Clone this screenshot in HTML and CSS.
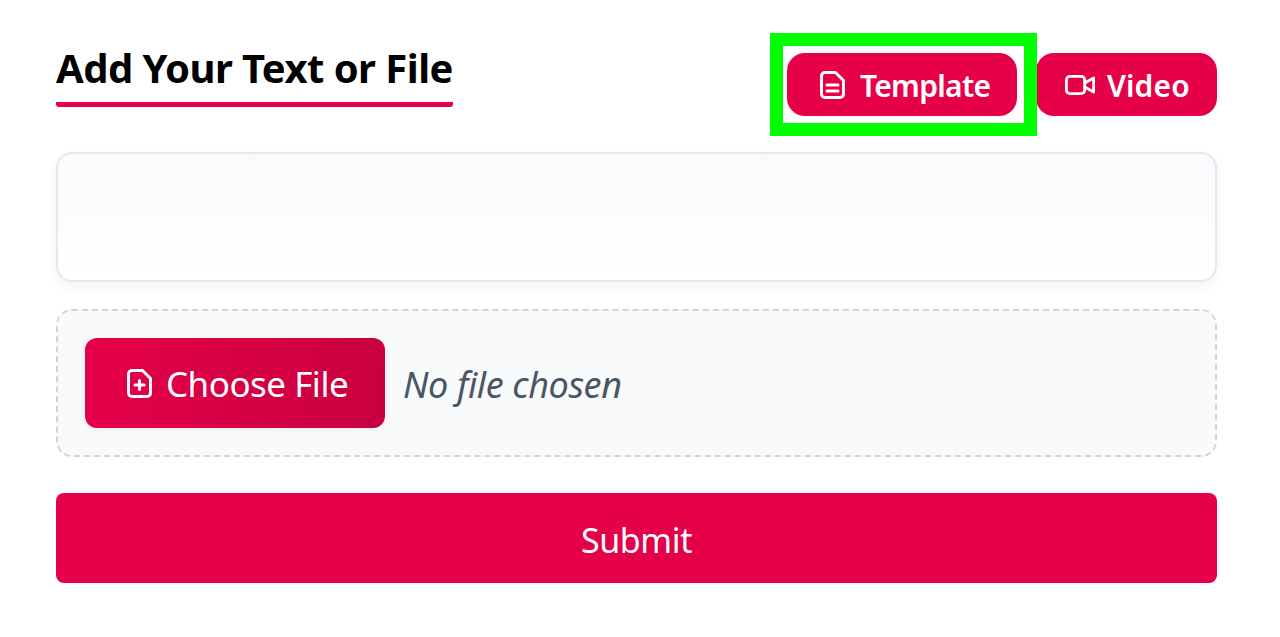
FILE: index.html
```html
<!DOCTYPE html>
<html lang="en">
<head>
<meta charset="utf-8">
<title>Add Your Text or File</title>
<link rel="stylesheet" href="styles.css">
</head>
<body>
<main class="panel">
  <header class="head">
    <h1 class="title">Add Your Text or File</h1>
    <div class="actions">
      <div class="highlighted">
        <button class="pill" type="button">
          <svg class="icon-file" viewBox="0 0 25 28" fill="none" stroke="currentColor" stroke-width="3" stroke-linecap="round" stroke-linejoin="round"><path d="M5 1.5h10.5l8 8V23a3.5 3.5 0 0 1-3.5 3.5H5A3.5 3.5 0 0 1 1.5 23V5A3.5 3.5 0 0 1 5 1.5z"/><path d="M7 14h11"/><path d="M7 20h11"/></svg>
          <span>Template</span>
        </button>
        <span class="marker"></span>
      </div>
      <button class="pill pill-video" type="button">
        <svg class="icon-video" viewBox="0 0 30 20" fill="none" stroke="currentColor" stroke-width="2.8" stroke-linecap="round" stroke-linejoin="round"><rect x="1.4" y="1.4" width="18.3" height="17.2" rx="3.5"/><path d="M19.7 8l8.9-5v14l-8.9-5"/></svg>
        <span>Video</span>
      </button>
    </div>
  </header>
  <textarea class="text-input" aria-label="Text"></textarea>
  <div class="file-box">
    <button class="choose" type="button">
      <svg class="icon-add" viewBox="0 0 25 29" fill="none" stroke="currentColor" stroke-width="3" stroke-linecap="round" stroke-linejoin="round"><path d="M5 1.5h10.5l8 8V24a3.5 3.5 0 0 1-3.5 3.5H5A3.5 3.5 0 0 1 1.5 24V5A3.5 3.5 0 0 1 5 1.5z"/><path d="M12.5 11.5v9"/><path d="M8 16h9"/></svg>
      <span>Choose File</span>
    </button>
    <span class="no-file">No file chosen</span>
  </div>
  <button class="submit" type="button">Submit</button>
</main>
</body>
</html>
```
FILE: styles.css
```css
* { box-sizing: border-box; }
html, body { margin: 0; height: 100%; background: #fff; overflow: hidden; }
body { font-family: "Noto Sans", "Open Sans", sans-serif; }
.panel { padding: 0 63px 0 56px; display: flex; flex-direction: column; }
.head { display: flex; justify-content: space-between; align-items: flex-start; height: 152px; }
.title {
  margin: 44px 0 0;
  height: 63px;
  font-size: 40px;
  line-height: 48px;
  font-weight: 700;
  letter-spacing: -0.54px;
  color: #000;
  border-bottom: 5px solid #e6004a;
  border-radius: 0 0 3px 3px;
  white-space: nowrap;
}
.actions { display: flex; gap: 19px; margin-top: 53px; }
.highlighted { position: relative; }
.marker { position: absolute; left: -17px; right: -20px; top: -20px; bottom: -20px; border: 13px solid #00ff00; pointer-events: none; }
.pill {
  height: 63px;
  width: 230px;
  border: 0;
  border-radius: 18px;
  background: #e6004a;
  color: #fff;
  font: 600 30px/63px "Noto Sans", sans-serif;
  letter-spacing: -0.7px;
  display: flex;
  align-items: center;
  gap: 15px;
  padding: 2px 0 0 33px;
}
.pill-video { width: 181px; gap: 12px; padding-left: 29px; letter-spacing: 0.1px; }
.icon-file { width: 25px; height: 28px; margin-top: -2px; }
.icon-video { width: 30px; height: 20px; margin-top: -2px; }
.icon-add { width: 25px; height: 29px; margin-top: -2px; }
.text-input {
  display: block;
  height: 130px;
  width: 100%;
  border: 2px solid #e2e8f0;
  border-radius: 16px;
  background: linear-gradient(180deg, #f8fafc, #fff);
  box-shadow: 0 4px 12px rgba(0,0,0,.05);
  resize: none;
  outline: 0;
}
.file-box {
  margin-top: 27px;
  height: 148px;
  border: 2px dashed #d1d5db;
  border-radius: 16px;
  background: #f9fafc;
  display: flex;
  align-items: center;
  padding-left: 27px;
  gap: 18px;
}
.choose {
  width: 300px;
  height: 90px;
  border: 0;
  border-radius: 12px;
  background: linear-gradient(100deg, #e6004a, #c80040);
  box-shadow: 0 2px 6px rgba(0,0,0,.06);
  color: #fff;
  font: 400 35px/90px "Noto Sans", sans-serif;
  letter-spacing: -0.5px;
  display: flex;
  align-items: center;
  gap: 14px;
  padding: 2px 0 0 42px;
}
.no-file { font-size: 36px; font-style: italic; color: #4b5563; letter-spacing: -0.4px; margin-top: 2px; }
.submit {
  margin-top: 36px;
  width: 100%;
  height: 90px;
  border: 0;
  border-radius: 8px;
  background: #e6004a;
  color: #fff;
  font: 400 34px/90px "Noto Sans", sans-serif;
  letter-spacing: -0.4px;
  padding: 2px 0 0;
}
```
